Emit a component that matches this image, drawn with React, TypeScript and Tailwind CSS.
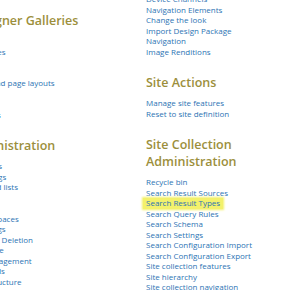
const lookAndFeel = [
  "Device Channels",
  "Navigation Elements",
  "Change the look",
  "Import Design Package",
  "Navigation",
  "Image Renditions",
]

const siteActions = ["Manage site features", "Reset to site definition"]

const collectionAdmin = [
  "Recycle bin",
  "Search Result Sources",
  "Search Result Types",
  "Search Query Rules",
  "Search Schema",
  "Search Settings",
  "Search Configuration Import",
  "Search Configuration Export",
  "Site collection features",
  "Site hierarchy",
  "Site collection navigation",
]

const galleries = [
  "Site columns",
  "Site content types",
  "Web parts",
  "List templates",
  "Master pages and page layouts",
  "Themes",
  "Solutions",
  "Composed looks",
]

const siteAdmin = [
  "Regional settings",
  "Language settings",
  "Site libraries and lists",
  "User alerts",
  "RSS",
  "Sites and workspaces",
  "Workflow settings",
  "Site Closure and Deletion",
  "Site output cache",
  "Term store management",
  "Popularity Trends",
  "Content and structure",
]

function Heading({ children }: { children: React.ReactNode }) {
  return (
    <h2 className="text-[12.5px] leading-[17px] font-semibold text-[#9c8f3c] whitespace-nowrap">
      {children}
    </h2>
  )
}

function Links({ items, highlight }: { items: string[]; highlight?: string }) {
  return (
    <ul className="mt-[7px]">
      {items.map((item) => (
        <li key={item} className="text-[8px] leading-[10.5px] text-[#2d74b4] whitespace-nowrap">
          {item === highlight ? (
            <a className="inline-block -mx-[3px] px-[3px] bg-[#f3f16b] shadow-[0_0_2px_1px_#f3f16b]">{item}</a>
          ) : (
            <a>{item}</a>
          )}
        </li>
      ))}
    </ul>
  )
}

export default function App() {
  return (
    <div className="w-[300px] h-[290px] overflow-hidden bg-white font-['Open_Sans',sans-serif]">
      <div className="flex items-start -ml-[61px]">
        <div className="w-[207px] shrink-0 mt-[12px]">
          <Heading>Web Designer Galleries</Heading>
          <Links items={galleries} />
          <div className="mt-[17px]">
            <Heading>Site Administration</Heading>
            <Links items={siteAdmin} />
          </div>
        </div>

        <div className="-mt-[6px]">
          <ul>
            {lookAndFeel.map((item) => (
              <li key={item} className="text-[8px] leading-[10.5px] text-[#2d74b4] whitespace-nowrap">
                <a>{item}</a>
              </li>
            ))}
          </ul>
          <div className="mt-[17px]">
            <Heading>Site Actions</Heading>
            <Links items={siteActions} />
          </div>
          <div className="mt-[17px]">
            <Heading>
              Site Collection
              <br />
              Administration
            </Heading>
            <Links items={collectionAdmin} highlight="Search Result Types" />
          </div>
        </div>
      </div>
    </div>
  )
}
